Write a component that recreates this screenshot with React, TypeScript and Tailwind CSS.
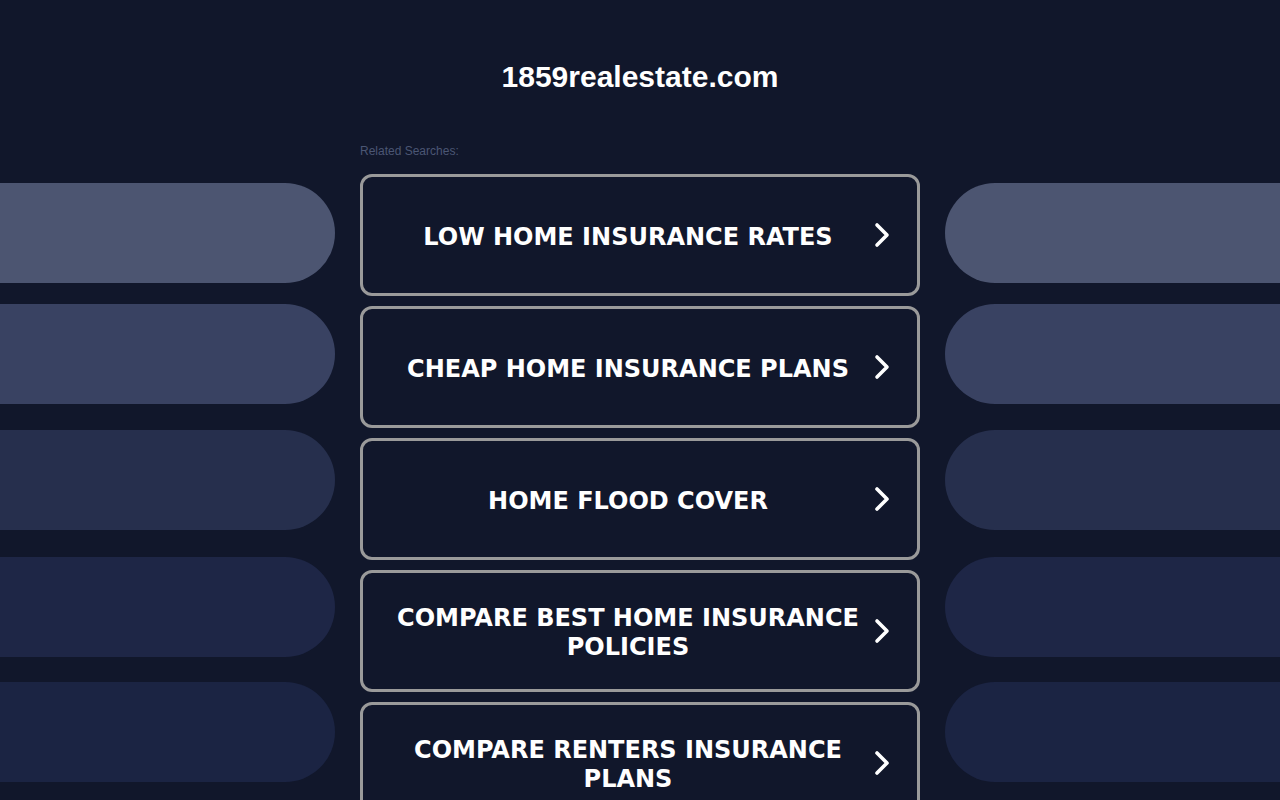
const SEARCHES = [
  "LOW HOME INSURANCE RATES",
  "CHEAP HOME INSURANCE PLANS",
  "HOME FLOOD COVER",
  "COMPARE BEST HOME INSURANCE POLICIES",
  "COMPARE RENTERS INSURANCE PLANS",
];

const PILLS = [
  { color: "bg-[#4c5571]", gap: "mt-0" },
  { color: "bg-[#394262]", gap: "mt-[21px]" },
  { color: "bg-[#262f4d]", gap: "mt-[26px]" },
  { color: "bg-[#1e2646]", gap: "mt-[27px]" },
  { color: "bg-[#1b2443]", gap: "mt-[25px]" },
];

function Chevron() {
  return (
    <svg width="18" height="28" viewBox="0 0 18 28" fill="none" className="shrink-0">
      <path d="M4 4 L14 14 L4 24" stroke="white" strokeWidth="3.6" strokeLinecap="round" strokeLinejoin="round" />
    </svg>
  );
}

function PillColumn({ side }: { side: "left" | "right" }) {
  return (
    <div className="flex flex-col pt-[43px]">
      {PILLS.map((p, i) => (
        <div
          key={i}
          className={`h-[100px] w-full ${p.color} ${p.gap} ${side === "left" ? "rounded-r-[50px]" : "rounded-l-[50px]"}`}
        />
      ))}
    </div>
  );
}

export default function App() {
  return (
    <div className="min-h-screen h-[800px] overflow-hidden bg-[#11172b] font-['Liberation_Sans',Arial,sans-serif]">
      {/* Header */}
      <div className="h-[140px] flex justify-center pt-[58px]">
        <h1 className="text-[30px] leading-[38px] font-bold text-white">1859realestate.com</h1>
      </div>

      <div className="grid grid-cols-[335px_560px_335px] gap-x-[25px]">
        <PillColumn side="left" />

        <div className="flex flex-col">
          <div className="text-[12px] leading-[20px] text-[#4b5674] mt-[1px] mb-[13px]">Related Searches:</div>
          <div className="flex flex-col gap-[10px]">
            {SEARCHES.map((s) => (
              <a
                key={s}
                href="#"
                className="h-[122px] shrink-0 flex items-center border-[3px] border-[#9a9a9a] rounded-[12px] pl-[30px] pr-[26px]"
              >
                <span className="flex-1 text-center text-white font-bold text-[24px] leading-[29px] pt-[4px] font-['DejaVu_Sans',Verdana,sans-serif]">
                  {s}
                </span>
                <span className="ml-[10px]"><Chevron /></span>
              </a>
            ))}
          </div>
        </div>

        <PillColumn side="right" />
      </div>
    </div>
  );
}
